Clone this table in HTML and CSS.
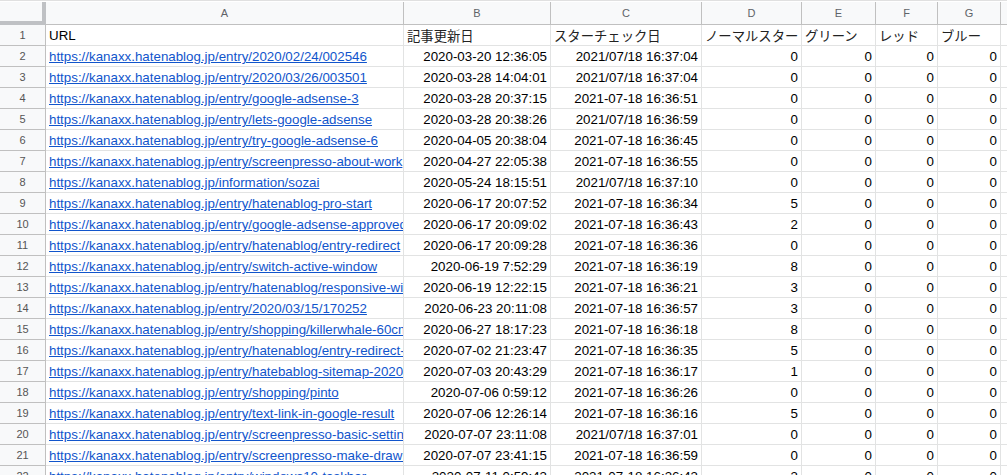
FILE: index.html
```html
<!DOCTYPE html>
<html lang="ja">
<head>
<meta charset="utf-8">
<title>Sheet</title>
<link rel="stylesheet" href="styles.css">
</head>
<body>
<div class="sheet">
  <div class="row hdr">
    <div class="corner"></div>
    <div class="ch">A</div><div class="ch">B</div><div class="ch">C</div><div class="ch">D</div><div class="ch">E</div><div class="ch">F</div><div class="ch">G</div><div class="ch last"></div>
  </div>
  <div class="row">
    <div class="rh">1</div>
    <div class="c">URL</div><div class="c jp">記事更新日</div><div class="c jp">スターチェック日</div><div class="c jp">ノーマルスター</div><div class="c jp">グリーン</div><div class="c jp">レッド</div><div class="c jp">ブルー</div><div class="c last"></div>
  </div>
  <div class="row">
    <div class="rh">2</div>
    <div class="c"><a href="#">https://kanaxx.hatenablog.jp/entry/2020/02/24/002546</a></div><div class="c r">2020-03-20 12:36:05</div><div class="c r">2021/07/18 16:37:04</div><div class="c r">0</div><div class="c r">0</div><div class="c r">0</div><div class="c r">0</div><div class="c last"></div>
  </div>
  <div class="row">
    <div class="rh">3</div>
    <div class="c"><a href="#">https://kanaxx.hatenablog.jp/entry/2020/03/26/003501</a></div><div class="c r">2020-03-28 14:04:01</div><div class="c r">2021/07/18 16:37:04</div><div class="c r">0</div><div class="c r">0</div><div class="c r">0</div><div class="c r">0</div><div class="c last"></div>
  </div>
  <div class="row">
    <div class="rh">4</div>
    <div class="c"><a href="#">https://kanaxx.hatenablog.jp/entry/google-adsense-3</a></div><div class="c r">2020-03-28 20:37:15</div><div class="c r">2021-07-18 16:36:51</div><div class="c r">0</div><div class="c r">0</div><div class="c r">0</div><div class="c r">0</div><div class="c last"></div>
  </div>
  <div class="row">
    <div class="rh">5</div>
    <div class="c"><a href="#">https://kanaxx.hatenablog.jp/entry/lets-google-adsense</a></div><div class="c r">2020-03-28 20:38:26</div><div class="c r">2021/07/18 16:36:59</div><div class="c r">0</div><div class="c r">0</div><div class="c r">0</div><div class="c r">0</div><div class="c last"></div>
  </div>
  <div class="row">
    <div class="rh">6</div>
    <div class="c"><a href="#">https://kanaxx.hatenablog.jp/entry/try-google-adsense-6</a></div><div class="c r">2020-04-05 20:38:04</div><div class="c r">2021-07-18 16:36:45</div><div class="c r">0</div><div class="c r">0</div><div class="c r">0</div><div class="c r">0</div><div class="c last"></div>
  </div>
  <div class="row">
    <div class="rh">7</div>
    <div class="c"><a href="#">https://kanaxx.hatenablog.jp/entry/screenpresso-about-work</a></div><div class="c r">2020-04-27 22:05:38</div><div class="c r">2021-07-18 16:36:55</div><div class="c r">0</div><div class="c r">0</div><div class="c r">0</div><div class="c r">0</div><div class="c last"></div>
  </div>
  <div class="row">
    <div class="rh">8</div>
    <div class="c"><a href="#">https://kanaxx.hatenablog.jp/information/sozai</a></div><div class="c r">2020-05-24 18:15:51</div><div class="c r">2021/07/18 16:37:10</div><div class="c r">0</div><div class="c r">0</div><div class="c r">0</div><div class="c r">0</div><div class="c last"></div>
  </div>
  <div class="row">
    <div class="rh">9</div>
    <div class="c"><a href="#">https://kanaxx.hatenablog.jp/entry/hatenablog-pro-start</a></div><div class="c r">2020-06-17 20:07:52</div><div class="c r">2021-07-18 16:36:34</div><div class="c r">5</div><div class="c r">0</div><div class="c r">0</div><div class="c r">0</div><div class="c last"></div>
  </div>
  <div class="row">
    <div class="rh">10</div>
    <div class="c"><a href="#">https://kanaxx.hatenablog.jp/entry/google-adsense-approved</a></div><div class="c r">2020-06-17 20:09:02</div><div class="c r">2021-07-18 16:36:43</div><div class="c r">2</div><div class="c r">0</div><div class="c r">0</div><div class="c r">0</div><div class="c last"></div>
  </div>
  <div class="row">
    <div class="rh">11</div>
    <div class="c"><a href="#">https://kanaxx.hatenablog.jp/entry/hatenablog/entry-redirect</a></div><div class="c r">2020-06-17 20:09:28</div><div class="c r">2021-07-18 16:36:36</div><div class="c r">0</div><div class="c r">0</div><div class="c r">0</div><div class="c r">0</div><div class="c last"></div>
  </div>
  <div class="row">
    <div class="rh">12</div>
    <div class="c"><a href="#">https://kanaxx.hatenablog.jp/entry/switch-active-window</a></div><div class="c r">2020-06-19 7:52:29</div><div class="c r">2021-07-18 16:36:19</div><div class="c r">8</div><div class="c r">0</div><div class="c r">0</div><div class="c r">0</div><div class="c last"></div>
  </div>
  <div class="row">
    <div class="rh">13</div>
    <div class="c"><a href="#">https://kanaxx.hatenablog.jp/entry/hatenablog/responsive-width</a></div><div class="c r">2020-06-19 12:22:15</div><div class="c r">2021-07-18 16:36:21</div><div class="c r">3</div><div class="c r">0</div><div class="c r">0</div><div class="c r">0</div><div class="c last"></div>
  </div>
  <div class="row">
    <div class="rh">14</div>
    <div class="c"><a href="#">https://kanaxx.hatenablog.jp/entry/2020/03/15/170252</a></div><div class="c r">2020-06-23 20:11:08</div><div class="c r">2021-07-18 16:36:57</div><div class="c r">3</div><div class="c r">0</div><div class="c r">0</div><div class="c r">0</div><div class="c last"></div>
  </div>
  <div class="row">
    <div class="rh">15</div>
    <div class="c"><a href="#">https://kanaxx.hatenablog.jp/entry/shopping/killerwhale-60cm</a></div><div class="c r">2020-06-27 18:17:23</div><div class="c r">2021-07-18 16:36:18</div><div class="c r">8</div><div class="c r">0</div><div class="c r">0</div><div class="c r">0</div><div class="c last"></div>
  </div>
  <div class="row">
    <div class="rh">16</div>
    <div class="c"><a href="#">https://kanaxx.hatenablog.jp/entry/hatenablog/entry-redirect-2</a></div><div class="c r">2020-07-02 21:23:47</div><div class="c r">2021-07-18 16:36:35</div><div class="c r">5</div><div class="c r">0</div><div class="c r">0</div><div class="c r">0</div><div class="c last"></div>
  </div>
  <div class="row">
    <div class="rh">17</div>
    <div class="c"><a href="#">https://kanaxx.hatenablog.jp/entry/hatebablog-sitemap-2020</a></div><div class="c r">2020-07-03 20:43:29</div><div class="c r">2021-07-18 16:36:17</div><div class="c r">1</div><div class="c r">0</div><div class="c r">0</div><div class="c r">0</div><div class="c last"></div>
  </div>
  <div class="row">
    <div class="rh">18</div>
    <div class="c"><a href="#">https://kanaxx.hatenablog.jp/entry/shopping/pinto</a></div><div class="c r">2020-07-06 0:59:12</div><div class="c r">2021-07-18 16:36:26</div><div class="c r">0</div><div class="c r">0</div><div class="c r">0</div><div class="c r">0</div><div class="c last"></div>
  </div>
  <div class="row">
    <div class="rh">19</div>
    <div class="c"><a href="#">https://kanaxx.hatenablog.jp/entry/text-link-in-google-result</a></div><div class="c r">2020-07-06 12:26:14</div><div class="c r">2021-07-18 16:36:16</div><div class="c r">5</div><div class="c r">0</div><div class="c r">0</div><div class="c r">0</div><div class="c last"></div>
  </div>
  <div class="row">
    <div class="rh">20</div>
    <div class="c"><a href="#">https://kanaxx.hatenablog.jp/entry/screenpresso-basic-setting</a></div><div class="c r">2020-07-07 23:11:08</div><div class="c r">2021/07/18 16:37:01</div><div class="c r">0</div><div class="c r">0</div><div class="c r">0</div><div class="c r">0</div><div class="c last"></div>
  </div>
  <div class="row">
    <div class="rh">21</div>
    <div class="c"><a href="#">https://kanaxx.hatenablog.jp/entry/screenpresso-make-drawing</a></div><div class="c r">2020-07-07 23:41:15</div><div class="c r">2021-07-18 16:36:59</div><div class="c r">0</div><div class="c r">0</div><div class="c r">0</div><div class="c r">0</div><div class="c last"></div>
  </div>
  <div class="row">
    <div class="rh">22</div>
    <div class="c"><a href="#">https://kanaxx.hatenablog.jp/entry/windows10-taskbar</a></div><div class="c r">2020-07-11 0:59:43</div><div class="c r">2021-07-18 16:36:43</div><div class="c r">3</div><div class="c r">0</div><div class="c r">0</div><div class="c r">0</div><div class="c last"></div>
  </div>
</div>
</body>
</html>
```

FILE: styles.css
```css
html, body {
  margin: 0;
  padding: 0;
  background: #fff;
  overflow: hidden;
}
.sheet {
  width: 1007px;
  height: 475px;
  overflow: hidden;
  border-top: 1px solid #e0e0e0;
  padding-top: 1px;
  box-sizing: border-box;
  font-family: "Liberation Sans", Arial, "Noto Sans CJK JP", sans-serif;
  font-size: 13.33px;
  color: #000;
}
.row {
  display: grid;
  grid-template-columns: 46px 358px 147px 151px 100px 74px 62px 63px 1fr;
  height: 21px;
}
.row.hdr {
  height: 23px;
}
.row > div {
  box-sizing: border-box;
  border-right: 1px solid #e2e3e3;
  border-bottom: 1px solid #e2e3e3;
  overflow: hidden;
  white-space: nowrap;
  line-height: 21px;
}
.corner {
  background: #f8f9fa;
  border-right: 4px solid #bfc1c4 !important;
  border-bottom: 4px solid #bfc1c4 !important;
}
.ch {
  background: #f8f9fa;
  color: #5f6368;
  font-size: 11px;
  text-align: center;
  line-height: 22px !important;
  border-right-color: #c0c0c0 !important;
  border-bottom-color: #c0c0c0 !important;
}
.ch.last {
  border-right: none !important;
}
.rh {
  background: #f8f9fa;
  color: #555;
  font-size: 11px;
  text-align: center;
  border-right-color: #c0c0c0 !important;
  border-bottom-color: #c0c0c0 !important;
}
.c {
  padding: 0 3px;
}
.c.r {
  text-align: right;
}
.c.jp {
  font-family: "Noto Sans CJK JP", sans-serif;
  font-size: 13.33px;
  color: #222;
}
.c.last {
  border-right: none !important;
}
.c a {
  color: #1155cc;
  text-decoration: underline;
}
```
